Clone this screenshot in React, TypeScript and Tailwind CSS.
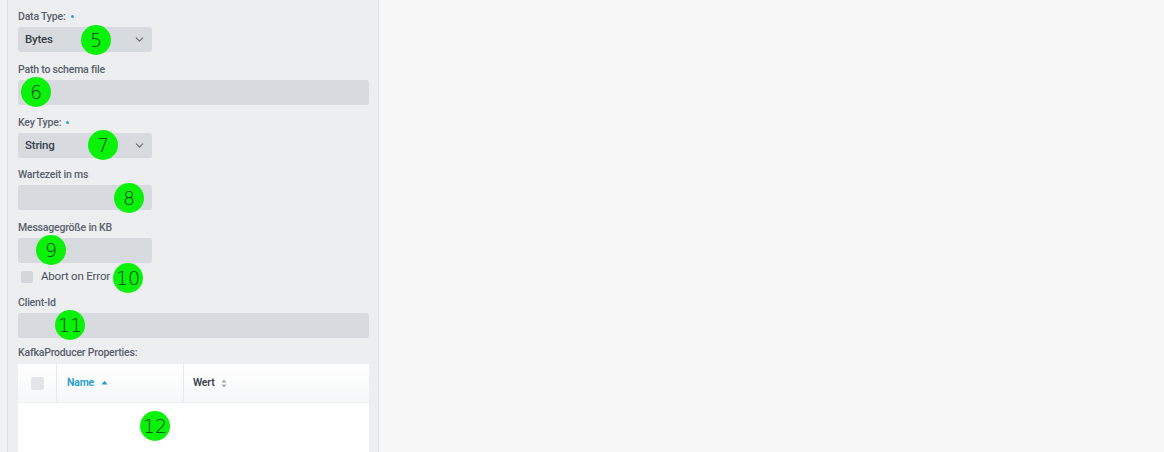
import { ChevronDown } from "lucide-react";

const font = { fontFamily: "Roboto, 'Liberation Sans', sans-serif" };

function Label({ text, required }: { text: string; required?: boolean }) {
  return (
    <div className="flex h-[14px] items-center text-[10.5px] font-medium leading-[14px] tracking-[-0.2px] text-[#59616c]">
      <span>{text}</span>
      {required && <span className="ml-[5px] mb-[2px] h-[3px] w-[3px] rounded-full bg-[#2aa3dc]" />}
    </div>
  );
}

function Select({ value }: { value: string }) {
  return (
    <div className="mt-[3px] flex h-[25px] w-[134px] items-center justify-between rounded-[3px] bg-[#d7dbdf] pl-[7px] pr-[6px]">
      <span className="text-[11.5px] font-medium tracking-[-0.2px] text-[#363e4a]">{value}</span>
      <ChevronDown size={13} strokeWidth={2} className="text-[#616b78]" />
    </div>
  );
}

function Input({ wide }: { wide?: boolean }) {
  return <div className={`mt-[3px] h-[25px] rounded-[3px] bg-[#d7dbdf] ${wide ? "w-[351px]" : "w-[134px]"}`} />;
}

function Marker({ n, x, y }: { n: number; x: number; y: number }) {
  return (
    <div
      className="absolute flex h-[30px] w-[30px] items-center justify-center rounded-full bg-[#0af20a] text-[19px] font-light leading-none text-[#143a14]"
      style={{ left: x - 15, top: y - 15, fontFamily: "'DejaVu Sans', sans-serif" }}
    >
      {n}
    </div>
  );
}

export default function App() {
  return (
    <div className="relative flex h-[452px] w-[1164px] overflow-hidden bg-[#f7f7f7]" style={font}>
      <div className="w-[8px] border-r border-[#dcdfe2] bg-[#f0f1f3]" />
      <div className="w-[371px] border-r border-[#e1e2e5] bg-[#eceef0] pl-[10px] pt-[10px]">
        <Label text="Data Type:" required />
        <Select value="Bytes" />

        <div className="mt-[11px]">
          <Label text="Path to schema file" />
          <Input wide />
        </div>

        <div className="mt-[11px]">
          <Label text="Key Type:" required />
          <Select value="String" />
        </div>

        <div className="mt-[10px]">
          <Label text="Wartezeit in ms" />
          <Input />
        </div>

        <div className="mt-[11px]">
          <Label text="Messagegröße in KB" />
          <Input />
        </div>

        <div className="mt-[8px] flex h-[12px] items-center pl-[3px]">
          <div className="h-[12px] w-[12px] rounded-[2px] bg-[#d3d7dc]" />
          <span className="ml-[8px] text-[11.5px] tracking-[-0.2px] text-[#4a525d]">Abort on Error</span>
        </div>

        <div className="mt-[13px]">
          <Label text="Client-Id" />
          <Input wide />
        </div>

        <div className="mt-[8px]">
          <Label text="KafkaProducer Properties:" />
          <div className="mt-[4px] w-[351px] bg-white">
            <div className="flex h-[39px] items-stretch border-b border-[#eceef0] bg-gradient-to-b from-white to-[#f6f7f8]">
              <div className="flex w-[39px] items-center justify-center border-r border-[#e6e8eb]">
                <div className="h-[13px] w-[13px] rounded-[2px] bg-[#e2e4e8]" />
              </div>
              <div className="flex w-[127px] items-center border-r border-[#e6e8eb] pl-[10px] text-[10.5px] font-semibold tracking-[-0.2px] text-[#1c9ccf]">
                Name
                <svg width="7" height="5" viewBox="0 0 7 5" className="ml-[7px] mb-[2px]">
                  <path d="M0.5 4.5 L3.5 0.8 L6.5 4.5 Z" fill="#1c9ccf" />
                </svg>
              </div>
              <div className="flex flex-1 items-center pl-[9px] text-[10.5px] font-semibold tracking-[-0.2px] text-[#3a424e]">
                Wert
                <svg width="6" height="9" viewBox="0 0 6 9" className="ml-[7px]">
                  <path d="M0.5 3.6 L3 0.6 L5.5 3.6 Z" fill="#a3a9b1" />
                  <path d="M0.5 5.4 L3 8.4 L5.5 5.4 Z" fill="#a3a9b1" />
                </svg>
              </div>
            </div>
            <div className="h-[60px]" />
          </div>
        </div>
      </div>
      <div className="flex-1" />

      <Marker n={5} x={96} y={40} />
      <Marker n={6} x={36} y={92} />
      <Marker n={7} x={103} y={145} />
      <Marker n={8} x={129} y={198} />
      <Marker n={9} x={51} y={250} />
      <Marker n={10} x={128} y={278} />
      <Marker n={11} x={70} y={325} />
      <Marker n={12} x={155} y={426} />
    </div>
  );
}
